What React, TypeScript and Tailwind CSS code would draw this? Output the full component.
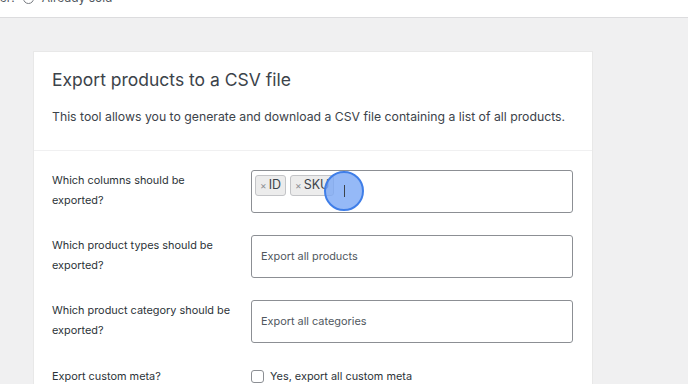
import React from "react";

const font = { fontFamily: "Inter, 'Noto Sans', sans-serif" };

function Row({ label, children }: { label: React.ReactNode; children: React.ReactNode }) {
  return (
    <div className="flex">
      <div className="w-[199px] pr-2 text-[10.9px] leading-[20px] text-[#2c3338]">{label}</div>
      <div className="w-[322px]">{children}</div>
    </div>
  );
}

export default function App() {
  return (
    <div className="w-[688px] h-[384px] overflow-hidden bg-[#f0f0f1] flex flex-col" style={font}>
      <div className="h-[18px] bg-white border-b border-[#dcdcde] shrink-0 relative overflow-hidden">
        <div className="flex items-center gap-2 -mt-[11px] text-[12px] text-[#50575e]">
          <span className="-ml-[4px]">ter:</span>
          <span className="w-[11px] h-[11px] rounded-full border border-[#787c82]" />
          <span>Already sold</span>
        </div>
      </div>
      <div className="pl-[33px] pt-[33px]">
        <div className="w-[560px] bg-white border border-[#e8e8e8] h-[400px]">
          <div className="px-[18px] pt-[14px] pb-[23px] border-b border-[#f0f0f1]">
            <h2 className="text-[17.5px] leading-[28px] text-[#3c434a]">Export products to a CSV file</h2>
            <p className="mt-[13px] text-[12.25px] leading-[20px] text-[#3c434a] whitespace-nowrap">
              This tool allows you to generate and download a CSV file containing a list of all products.
            </p>
          </div>
          <div className="px-[18px] pt-[19px] flex flex-col gap-[22px]">
            <Row label={<>Which columns should be<br />exported?</>}>
              <div className="relative h-[43px] border border-[#8c8f94] rounded-[3px] px-[3px] pt-[4px] flex gap-[4px] items-start">
                <span className="flex items-center gap-[2px] h-[21px] px-[4px] bg-[#ececec] border border-[#c3c4c7] rounded-[3px] text-[12.5px] text-[#3c434a]">
                  <span className="text-[10px] text-[#8c8f94]">×</span>ID
                </span>
                <span className="flex items-center gap-[2px] h-[21px] px-[4px] bg-[#ececec] border border-[#c3c4c7] rounded-[3px] text-[12.5px] text-[#3c434a]">
                  <span className="text-[10px] text-[#8c8f94]">×</span>SKU
                </span>
                <div className="absolute left-[72px] top-[0px] w-[40px] h-[40px] rounded-full bg-[#7aa7f5]/80 border-2 border-[#3f7ee8] flex items-center justify-center">
                  <span className="w-px h-[12px] bg-[#3c434a]" />
                </div>
              </div>
            </Row>
            <Row label={<>Which product types should be<br />exported?</>}>
              <div className="h-[43px] border border-[#8c8f94] rounded-[3px] px-[9px] flex items-center text-[10.9px] text-[#50575e]">
                Export all products
              </div>
            </Row>
            <Row label={<>Which product category should be<br />exported?</>}>
              <div className="h-[43px] border border-[#8c8f94] rounded-[3px] px-[9px] flex items-center text-[10.9px] text-[#50575e]">
                Export all categories
              </div>
            </Row>
            <div className="mt-[1px]">
              <Row label="Export custom meta?">
                <label className="flex items-center gap-[6px] text-[10.9px] leading-[20px] text-[#2c3338]">
                  <span className="w-[13px] h-[13px] border border-[#8c8f94] rounded-[3px] bg-white" />
                  Yes, export all custom meta
                </label>
              </Row>
            </div>
          </div>
        </div>
      </div>
    </div>
  );
}
